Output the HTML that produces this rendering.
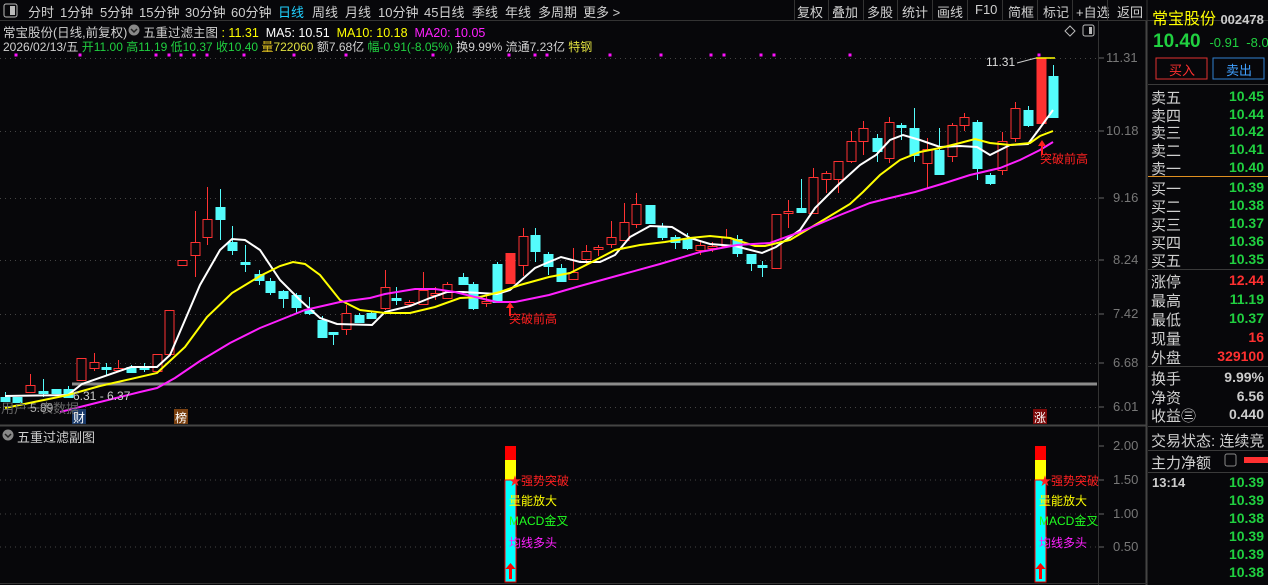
<!DOCTYPE html><html><head><meta charset="utf-8"><style>
*{margin:0;padding:0;box-sizing:border-box}
body{width:1268px;height:585px;background:#07070a;overflow:hidden;font-family:"Liberation Sans","Noto Sans CJK SC",sans-serif;color:#c8c8c8;position:relative}
.a{position:absolute;white-space:nowrap}
.tb{font-size:13px;top:2px;color:#d0d0d0}
.r{position:absolute;left:1151px;font-size:15px;color:#d0d0d0}
.v{position:absolute;right:4px;font-size:14px;font-weight:bold;color:#20d040;font-family:"Liberation Sans",sans-serif}
.sep{position:absolute;left:1148px;width:120px;height:1px;background:#3a3a3a}
</style></head><body>
<svg class="a" style="left:0;top:0" width="1268" height="585" id="s">
<line x1="0" y1="20.5" x2="1268" y2="20.5" stroke="#333"/>
<line x1="1098.5" y1="21" x2="1098.5" y2="585" stroke="#333"/>
<line x1="1146.5" y1="21" x2="1146.5" y2="585" stroke="#444" stroke-width="2"/>
<line x1="1147" y1="0" x2="1147" y2="21" stroke="#333"/>
<line x1="0" y1="425.5" x2="1147" y2="425.5" stroke="#444" stroke-width="2"/>
<line x1="0" y1="583.5" x2="1147" y2="583.5" stroke="#333"/>
<g id="grid" stroke="#444" stroke-dasharray="1,4"></g>
<line x1="72" y1="384" x2="1097" y2="384" stroke="#8c8c8c" stroke-width="3"/>
<g id="c"></g>
<polyline fill="none" stroke="#fff" stroke-width="2" points="5,396 68,395 82,384 131,367 157,367 170,355 182,327 200,285 220,250 232,239 245,240 260,250 280,280 300,300 320,318 337,324 372,325 385,312 410,306 430,298 447,292 463,292 497,294 510,290 535,268 549,262 561,257 580,262 600,262 615,255 630,237 650,226 672,227 690,238 710,244 735,246 762,253 776,247 800,230 815,208 838,185 860,165 876,155 890,140 903,135 920,140 940,147 960,146 977,147 990,155 1010,145 1028,144 1040,128 1053,110"/>
<polyline fill="none" stroke="#ffff00" stroke-width="2" points="5,408 68,395 100,386 157,373 185,347 207,317 232,293 260,276 280,266 293,262 305,264 320,275 340,300 360,310 385,313 410,313 435,307 460,298 480,297 500,292 520,285 549,277 570,273 590,263 615,250 640,245 665,242 690,238 710,236 730,238 755,246 765,246 790,240 810,228 830,216 850,204 863,192 880,175 900,160 920,152 940,148 960,143 975,139 990,143 1010,145 1030,143 1040,136 1053,131"/>
<polyline fill="none" stroke="#ff20ff" stroke-width="2" points="60,412 100,402 140,392 157,388 175,378 200,361 230,343 260,328 285,318 305,310 340,302 370,298 385,294 415,289 435,289 455,292 475,297 497,302 515,302 549,295 580,286 620,275 660,264 700,252 737,245 770,243 800,232 840,215 870,203 890,198 915,192 945,183 970,175 1000,168 1020,160 1040,150 1053,142"/>
<line x1="1017" y1="63" x2="1036" y2="58" stroke="#ccc"/>
<line x1="1036" y1="58" x2="1055" y2="58" stroke="#ffff00" stroke-width="1.5"/>
<path d="M510 302 l-4 6 h3 v8 h2 v-8 h3z" fill="#ff2020"/>
<path d="M1042 140 l-4 6 h3 v8 h2 v-8 h3z" fill="#ff2020"/>
<g id="dots" fill="#ff10ff"></g>
<rect x="72" y="409" width="14" height="15" fill="#1a3a6a"/>
<rect x="174" y="409" width="14" height="15" fill="#7a4010"/>
<rect x="1033" y="409" width="14" height="15" fill="#7a0808"/>
<circle cx="8" cy="435" r="5.5" fill="#888"/>
<circle cx="134" cy="30" r="5.5" fill="#888"/>
<path d="M5 434 l3 3 3-3 M131 29 l3 3 3-3" stroke="#222" stroke-width="1.5" fill="none"/>
<path d="M1070 26 l5 5 -5 5 -5 -5z" fill="none" stroke="#bbb"/>
<rect x="1083" y="25" width="11" height="11" rx="2" fill="none" stroke="#bbb"/><rect x="1089" y="27" width="3" height="7" fill="#bbb"/>
<rect x="4" y="4" width="13" height="13" rx="2" fill="none" stroke="#bbb"/><rect x="10" y="6" width="5" height="9" fill="#bbb"/>
<g stroke="#444" stroke-dasharray="1,4"><line x1="0" y1="480" x2="1098" y2="480"/><line x1="0" y1="514" x2="1098" y2="514"/><line x1="0" y1="547" x2="1098" y2="547"/></g>
<g id="sub"></g>
<g stroke="#666"><line x1="1099" y1="58" x2="1104" y2="58"/><line x1="1099" y1="131" x2="1104" y2="131"/><line x1="1099" y1="198" x2="1104" y2="198"/><line x1="1099" y1="260" x2="1104" y2="260"/><line x1="1099" y1="314" x2="1104" y2="314"/><line x1="1099" y1="363" x2="1104" y2="363"/><line x1="1099" y1="407" x2="1104" y2="407"/><line x1="1099" y1="446" x2="1104" y2="446"/><line x1="1099" y1="480" x2="1104" y2="480"/><line x1="1099" y1="514" x2="1104" y2="514"/><line x1="1099" y1="547" x2="1104" y2="547"/></g>
<line x1="1148" y1="176.5" x2="1268" y2="176.5" stroke="#e09020"/>
<rect x="1156" y="58" width="51" height="21" fill="none" stroke="#e03030"/>
<rect x="1213" y="58" width="51" height="21" fill="none" stroke="#3080d0"/>
<rect x="1244" y="457" width="24" height="6" fill="#ff3030"/>
<rect x="1225" y="454" width="11" height="12" rx="2" fill="none" stroke="#888"/>
</svg>
<script>
var NS="http://www.w3.org/2000/svg";
function el(p,t,a){var e=document.createElementNS(NS,t);for(var k in a)e.setAttribute(k,a[k]);document.getElementById(p).appendChild(e);}
[58,131,198,260,314,363,407].forEach(function(y){el("grid","line",{x1:0,y1:y+.5,x2:1098,y2:y+.5});});
var C=[[5,397,401,392,401,"d"],[17,397,402,397,402,"d"],[30,385,392,374,393,"u"],[43,391,393,379,397,"d"],[56,389,393,389,393,"d"],[68,389,397,386,397,"d"],[81,358,380,358,381,"u"],[94,362,368,353,371,"u"],[106,367,369,363,375,"d"],[118,368,370,360,372,"u"],[131,367,372,365,372,"d"],[144,367,369,363,372,"d"],[157,354,371,354,371,"u"],[169,310,354,310,354,"u"],[182,260,265,260,265,"u"],[195,242,255,211,277,"u"],[207,219,237,187,245,"u"],[220,207,219,189,240,"d"],[232,242,250,226,255,"d"],[245,262,264,245,272,"d"],[259,274,280,270,285,"d"],[270,281,292,278,295,"d"],[283,291,298,290,308,"d"],[296,295,307,293,313,"d"],[309,310,313,297,315,"d"],[322,320,337,316,337,"d"],[333,332,334,332,345,"d"],[346,313,329,305,335,"u"],[359,315,322,313,322,"d"],[371,313,318,311,318,"d"],[385,287,308,270,310,"u"],[396,298,300,287,305,"d"],[409,302,304,300,306,"u"],[423,290,304,272,304,"u"],[435,293,295,287,300,"u"],[447,284,298,282,298,"u"],[463,277,284,273,285,"d"],[473,284,308,282,310,"d"],[486,301,303,295,307,"u"],[497,264,302,262,302,"d"],[510,253,283,253,283,"R"],[523,236,265,228,276,"u"],[535,235,251,228,262,"d"],[548,254,266,252,275,"d"],[561,268,281,264,281,"d"],[573,272,279,248,280,"u"],[586,251,259,245,264,"u"],[598,247,249,245,256,"u"],[611,237,244,221,248,"u"],[624,222,240,203,241,"u"],[636,204,224,193,228,"u"],[650,205,223,205,224,"d"],[662,227,237,223,240,"d"],[675,237,242,235,249,"d"],[687,239,248,233,250,"d"],[700,245,250,240,255,"u"],[712,246,248,242,252,"u"],[726,237,246,229,248,"u"],[737,239,253,235,257,"d"],[751,254,263,254,271,"d"],[762,265,267,261,277,"d"],[776,214,268,214,268,"u"],[788,211,213,200,228,"u"],[801,208,212,179,213,"d"],[813,177,213,168,213,"u"],[826,173,179,171,193,"u"],[838,161,179,161,193,"u"],[851,141,161,131,163,"u"],[863,128,141,121,155,"u"],[877,138,151,134,162,"d"],[889,122,158,117,163,"u"],[901,125,127,123,140,"d"],[914,128,155,108,162,"d"],[927,149,163,138,188,"u"],[939,150,174,128,174,"d"],[952,125,156,123,162,"u"],[964,117,125,113,131,"u"],[977,122,168,120,180,"d"],[990,175,183,173,185,"d"],[1002,141,170,132,175,"u"],[1015,108,138,102,142,"u"],[1028,110,125,106,127,"d"],[1041,58,123,58,123,"R"],[1053,76,117,65,118,"d"]];
C.forEach(function(c){var col=c[5]=="d"?"#54fcfc":"#ff3232";
el("c","line",{x1:c[0]+.5,y1:c[3],x2:c[0]+.5,y2:c[4],stroke:col});
var h=Math.max(c[2]-c[1],1.5);
if(c[5]=="u")el("c","rect",{x:c[0]-4,y:c[1]+.5,width:9,height:h,fill:"#07070a",stroke:col});
else el("c","rect",{x:c[0]-4.5,y:c[1],width:10,height:h+1,fill:col});});
[16,80,156,169,181,194,207,244,294,346,433,509,535,547,610,661,711,724,761,774,850,1039].forEach(function(x){el("dots","rect",{x:x-1.5,y:53.5,width:3,height:3});});
[505,1035].forEach(function(x){el("sub","rect",{x:x,y:446,width:11,height:14,fill:"#ff0000"});el("sub","rect",{x:x,y:460,width:11,height:20,fill:"#ffff00"});el("sub","rect",{x:x,y:480,width:11,height:102,fill:"#00ffff",stroke:"#ff0000"});el("sub","path",{d:"M"+(x+5.5)+" 563 l-5 6 h3.5 v10 h3 v-10 h3.5z",fill:"#ff0000"});});
</script>
<!-- toolbar -->
<span class="a tb" style="left:28px">分时</span><span class="a tb" style="left:60px">1分钟</span><span class="a tb" style="left:100px">5分钟</span><span class="a tb" style="left:139px">15分钟</span><span class="a tb" style="left:185px">30分钟</span><span class="a tb" style="left:231px">60分钟</span><span class="a tb" style="left:278px;color:#20d0ff">日线</span><span class="a tb" style="left:312px">周线</span><span class="a tb" style="left:345px">月线</span><span class="a tb" style="left:378px">10分钟</span><span class="a tb" style="left:424px">45日线</span><span class="a tb" style="left:472px">季线</span><span class="a tb" style="left:505px">年线</span><span class="a tb" style="left:538px">多周期</span><span class="a tb" style="left:583px">更多 &gt;</span>
<span class="a tb" style="left:797px">复权</span><span class="a tb" style="left:832px">叠加</span><span class="a tb" style="left:867px">多股</span><span class="a tb" style="left:902px">统计</span><span class="a tb" style="left:937px">画线</span><span class="a tb" style="left:975px">F10</span><span class="a tb" style="left:1008px">简框</span><span class="a tb" style="left:1043px">标记</span><span class="a tb" style="left:1076px">+自选</span><span class="a tb" style="left:1117px">返回</span>
<div class="a" style="left:794px;top:0;width:1px;height:20px;background:#333;box-shadow:34px 0 #333,69px 0 #333,103px 0 #333,138px 0 #333,173px 0 #333,208px 0 #333,243px 0 #333,278px 0 #333,313px 0 #333"></div>
<!-- info -->
<div class="a" style="left:3px;top:22px;font-size:12.5px;color:#d0d0d0">常宝股份(日线,前复权)</div>
<div class="a" style="left:143px;top:22px;font-size:12.5px;color:#d0d0d0">五重过滤主图 <span style="color:#ffff00">: 11.31</span> <span style="color:#fff">&nbsp;MA5: 10.51</span> <span style="color:#ffff00">&nbsp;MA10: 10.18</span> <span style="color:#ff20ff">&nbsp;MA20: 10.05</span></div>
<div class="a" style="left:3px;top:38px;font-size:12px;color:#d0d0d0">2026/02/13/五 <span style="color:#20d040">开11.00 高11.19 低10.37 收10.40</span> <span style="color:#e0c020">量</span><span style="color:#e0e040">722060</span> 额7.68亿 <span style="color:#20d040">幅-0.91(-8.05%)</span> 换9.99% 流通7.23亿 <span style="color:#e0e040">特钢</span></div>
<div class="a" style="left:986px;top:55px;font-size:12px;color:#ddd">11.31</div>
<div class="a" style="left:509px;top:310px;font-size:12px;color:#ff2020">突破前高</div>
<div class="a" style="left:1040px;top:150px;font-size:12px;color:#ff2020">突破前高</div>
<div class="a" style="left:73px;top:389px;font-size:12px;color:#ccc">6.31 - 6.37</div>
<div class="a" style="left:1px;top:398px;font-size:13px;color:#666">用户一表数据</div>
<div class="a" style="left:30px;top:401px;font-size:12px;color:#aaa">5.89</div>
<div class="a" style="left:73px;top:409px;font-size:12px;color:#fff">财</div>
<div class="a" style="left:175px;top:409px;font-size:12px;color:#fff">榜</div>
<div class="a" style="left:1034px;top:409px;font-size:12px;color:#fff">涨</div>
<div class="a" style="left:17px;top:427px;font-size:13px;color:#d0d0d0">五重过滤副图</div>
<!-- sub labels -->
<div class="a" style="left:509px;top:472px;font-size:12px;color:#ff2020">★强势突破</div><div class="a" style="left:509px;top:492px;font-size:12px;color:#ffff00">量能放大</div><div class="a" style="left:509px;top:512px;font-size:12px;color:#20ff20">MACD金叉</div><div class="a" style="left:509px;top:534px;font-size:12px;color:#ff20ff">均线多头</div>
<div class="a" style="left:1039px;top:472px;font-size:12px;color:#ff2020">★强势突破</div><div class="a" style="left:1039px;top:492px;font-size:12px;color:#ffff00">量能放大</div><div class="a" style="left:1039px;top:512px;font-size:12px;color:#20ff20">MACD金叉</div><div class="a" style="left:1039px;top:534px;font-size:12px;color:#ff20ff">均线多头</div>
<!-- axis -->
<div class="a" style="left:1106px;top:0;font-size:13px;color:#777;line-height:1">
<div class="a" style="top:51px">11.31</div><div class="a" style="top:124px">10.18</div><div class="a" style="top:191px;left:7px">9.16</div><div class="a" style="top:253px;left:7px">8.24</div><div class="a" style="top:307px;left:7px">7.42</div><div class="a" style="top:356px;left:7px">6.68</div><div class="a" style="top:400px;left:7px">6.01</div>
<div class="a" style="top:439px;left:7px">2.00</div><div class="a" style="top:473px;left:7px">1.50</div><div class="a" style="top:507px;left:7px">1.00</div><div class="a" style="top:540px;left:7px">0.50</div></div>
<!-- right panel -->
<div class="a" style="left:1152px;top:5px;font-size:16px;color:#ffff00">常宝股份 <span style="font-size:13px;font-weight:bold;color:#ccc">002478</span></div>
<div class="a" style="left:1153px;top:31px;font-size:19px;font-weight:bold;color:#20d040">10.40 <span style="font-size:13px;font-weight:normal">&nbsp;-0.91 &nbsp;-8.0</span></div>
<div class="a" style="left:1169px;top:60px;font-size:13px;color:#ff3030">买入</div>
<div class="a" style="left:1226px;top:60px;font-size:13px;color:#40a0ff">卖出</div>
<div class="sep" style="top:84px"></div><div class="sep" style="top:269px"></div><div class="sep" style="top:366px"></div><div class="sep" style="top:426px"></div><div class="sep" style="top:450px"></div><div class="sep" style="top:472px"></div>
<div class="r" style="top:87px">卖五</div><div class="v" style="top:88px">10.45</div>
<div class="r" style="top:105px">卖四</div><div class="v" style="top:106px">10.44</div>
<div class="r" style="top:122px">卖三</div><div class="v" style="top:123px">10.42</div>
<div class="r" style="top:140px">卖二</div><div class="v" style="top:141px">10.41</div>
<div class="r" style="top:158px">卖一</div><div class="v" style="top:159px">10.40</div>
<div class="r" style="top:178px">买一</div><div class="v" style="top:179px">10.39</div>
<div class="r" style="top:196px">买二</div><div class="v" style="top:197px">10.38</div>
<div class="r" style="top:214px">买三</div><div class="v" style="top:215px">10.37</div>
<div class="r" style="top:232px">买四</div><div class="v" style="top:233px">10.36</div>
<div class="r" style="top:250px">买五</div><div class="v" style="top:251px">10.35</div>
<div class="r" style="top:271px">涨停</div><div class="v" style="top:272px;color:#ff3030">12.44</div>
<div class="r" style="top:290px">最高</div><div class="v" style="top:291px">11.19</div>
<div class="r" style="top:309px">最低</div><div class="v" style="top:310px">10.37</div>
<div class="r" style="top:328px">现量</div><div class="v" style="top:329px;color:#ff3030">16</div>
<div class="r" style="top:347px">外盘</div><div class="v" style="top:348px;color:#ff3030">329100</div>
<div class="r" style="top:368px">换手</div><div class="v" style="top:369px;color:#ccc">9.99%</div>
<div class="r" style="top:387px">净资</div><div class="v" style="top:388px;color:#ccc">6.56</div>
<div class="r" style="top:405px">收益㊂</div><div class="v" style="top:406px;color:#ccc">0.440</div>
<div class="r" style="top:430px">交易状态: 连续竞</div>
<div class="r" style="top:452px">主力净额</div>
<div class="a" style="left:1152px;top:475px;font-size:13px;font-weight:bold;color:#ccc">13:14</div>
<div class="v" style="top:474px">10.39</div><div class="v" style="top:492px">10.39</div><div class="v" style="top:510px">10.38</div><div class="v" style="top:528px">10.39</div><div class="v" style="top:546px">10.39</div><div class="v" style="top:564px">10.38</div>
</body></html>
